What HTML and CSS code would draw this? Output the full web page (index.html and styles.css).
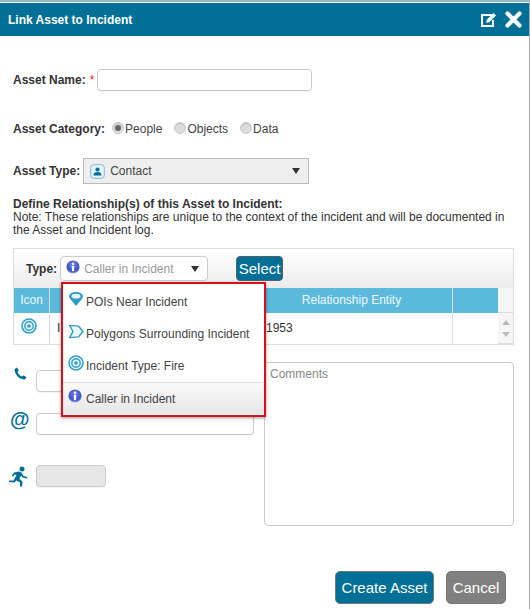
FILE: index.html
```html
<!DOCTYPE html>
<html lang="en">
<head>
    <meta charset="UTF-8">
    <title>Link Asset to Incident</title>
    <link rel="stylesheet" href="styles.css">
</head>
<body>
    <svg width="0" height="0" class="defs">
        <defs>
            <radialGradient id="info-fill" cx="50%" cy="35%" r="65%">
                <stop offset="0%" stop-color="#6f86e6"/>
                <stop offset="75%" stop-color="#3c52c4"/>
                <stop offset="100%" stop-color="#aab4e8"/>
            </radialGradient>
            <symbol id="info" viewBox="0 0 14 14">
                <circle cx="7" cy="7" r="6.6" fill="url(#info-fill)"/>
                <circle cx="7" cy="3.8" r="1.2" fill="#fff"/>
                <rect x="5.9" y="5.8" width="2.2" height="5.4" rx=".4" fill="#fff"/>
            </symbol>
            <symbol id="target" viewBox="0 0 16 16">
                <circle cx="8" cy="8" r="7" fill="#e4f4fa" stroke="#2f9fcb" stroke-width="1.6"/>
                <circle cx="8" cy="8" r="4.2" fill="none" stroke="#2f9fcb" stroke-width="1.4"/>
                <circle cx="8" cy="8" r="1.8" fill="#2f9fcb"/>
            </symbol>
        </defs>
    </svg>

    <div class="modal">
        <div class="modal-header">
            <span class="modal-title">Link Asset to Incident</span>
            <svg class="edit-icon" width="17" height="16" viewBox="0 0 17 16">
                <path d="M12 3H2v11h11V8" fill="none" stroke="#fff" stroke-width="2"/>
                <path d="M6 11l1-3.5L13.5 1 16 3.5 9.500 10z" fill="#fff"/>
            </svg>
            <svg class="close-icon" width="17" height="17" viewBox="0 0 17 17">
                <path d="M2.500 2.500l12 12M14.500 2.500l-12 12" stroke="#fff" stroke-width="4.200" stroke-linecap="round"/>
            </svg>
        </div>

        <div class="modal-body">
            <div class="form-row name-row">
                <label class="field-label">Asset Name:</label>
                <span class="required">*</span>
                <input type="text" class="text-input name-input">
            </div>

            <div class="form-row category-row">
                <label class="field-label">Asset Category:</label>
                <span class="radio checked"></span><span class="radio-text">People</span>
                <span class="radio"></span><span class="radio-text">Objects</span>
                <span class="radio"></span><span class="radio-text">Data</span>
            </div>

            <div class="form-row type-row">
                <label class="field-label">Asset Type:</label>
                <div class="asset-select">
                    <svg class="contact-icon" width="15" height="15" viewBox="0 0 15 15">
                        <rect x=".7" y=".7" width="13.600" height="13.600" rx="3" fill="#e6f3f8" stroke="#7dbcd5"/>
                        <circle cx="7.500" cy="5.500" r="2.100" fill="#046f98"/>
                        <path d="M3.500 11.500c0-2.500 1.500-3.500 4-3.500s4 1 4 3.500z" fill="#046f98"/>
                    </svg>
                    <span>Contact</span>
                    <span class="arrow"></span>
                </div>
            </div>

            <div class="relationship-note">
                <strong>Define Relationship(s) of this Asset to Incident:</strong><br>
                Note: These relationships are unique to the context of the incident and will be documented in the Asset and Incident log.
            </div>

            <div class="rel-panel">
                <div class="rel-toolbar">
                    <label class="field-label">Type:</label>
                    <div class="type-select">
                        <svg class="item-icon" width="14" height="14"><use href="#info"/></svg>
                        <span class="placeholder">Caller in Incident</span>
                        <span class="arrow"></span>
                    </div>
                    <button class="select-button">Select</button>
                </div>

                <div class="rel-head">
                    <div class="col-icon">Icon</div>
                    <div class="col-name"></div>
                    <div class="col-entity">Relationship Entity</div>
                    <div class="col-extra"></div>
                    <div class="col-scroll"></div>
                </div>
                <div class="rel-row">
                    <div class="col-icon"><svg width="16" height="16"><use href="#target"/></svg></div>
                    <div class="col-name">I</div>
                    <div class="col-entity">1953</div>
                    <div class="col-extra"></div>
                    <div class="col-scroll">
                        <span class="scroll-up"></span>
                        <span class="scroll-down"></span>
                    </div>
                </div>

                <ul class="type-menu">
                    <li>
                        <svg class="item-icon" width="16" height="16" viewBox="0 0 16 18" preserveAspectRatio="none">
                            <path d="M8 17L1.800 8.500C-.5 4.500 3 1 8 1s8.500 3.500 6.200 7.500z" fill="#2c9cc9"/>
                            <ellipse cx="8" cy="5.800" rx="4.400" ry="2.600" fill="#e8f5fa"/>
                        </svg>
                        POIs Near Incident
                    </li>
                    <li>
                        <svg class="item-icon" width="16" height="15" viewBox="0 0 16 17" preserveAspectRatio="none">
                            <path d="M1.500 1.500L10.500 2.500 15 8.500 10.500 14.500 1.500 15.500 5 8.500z" fill="#eef8fc" stroke="#2c9cc9" stroke-width="1.500" stroke-linejoin="round"/>
                        </svg>
                        Polygons Surrounding Incident
                    </li>
                    <li>
                        <svg class="item-icon" width="16" height="16"><use href="#target"/></svg>
                        Incident Type: Fire
                    </li>
                    <li class="active">
                        <svg class="item-icon" width="14" height="14"><use href="#info"/></svg>
                        Caller in Incident
                    </li>
                </ul>
            </div>

            <div class="contact-grid">
                <div class="contact-fields">
                    <div class="contact-row phone-row">
                        <svg class="row-icon" width="13" height="13" viewBox="0 0 13 13">
                            <path d="M2.800.5L4.800 3.400 3.500 5C4.300 7 6 8.700 8 9.500L9.600 8.200 12.500 10.200 10.800 12.500C5.500 12.500.5 7.500.5 2.200z" fill="#046f98"/>
                        </svg>
                        <input type="text" class="text-input wide-input">
                    </div>
                    <div class="contact-row email-row">
                        <span class="at-sign">@</span>
                        <input type="text" class="text-input wide-input">
                    </div>
                    <div class="contact-row run-row">
                        <svg class="row-icon" width="21" height="21" viewBox="0 0 21 21">
                            <circle cx="14" cy="3" r="2.500" fill="#046f98"/>
                            <path d="M6 6.500L11 5.500 13.500 6.500 15.500 10 19.500 11 19 12.500 14.500 11.500 13 9.500 11.500 13 14.500 15.500 14 20.500 12 20.500 12 16.500 8.500 14.500 6.500 16.500 1 16 1 14.500 5.500 14.500 8.500 9 6.800 8.500 5 10.500 3.800 9.500z" fill="#046f98"/>
                        </svg>
                        <input type="text" class="text-input short-input" disabled>
                    </div>
                </div>
                <textarea class="comments" placeholder="Comments"></textarea>
            </div>

            <div class="modal-actions">
                <button class="action-button create-button">Create Asset</button>
                <button class="action-button cancel-button">Cancel</button>
            </div>
        </div>
    </div>
</body>
</html>
```

FILE: styles.css
```css
* {
    box-sizing: border-box;
    margin: 0;
    padding: 0;
}

body {
    font-family: "Liberation Sans", Arial, sans-serif;
    font-size: 12px;
    color: #333;
    background: #fff;
    overflow: hidden;
}

.defs {
    position: absolute;
}

.modal {
    width: 530px;
    height: 609px;
    padding-top: 1px;
    border-top: 2px solid #9db6c2;
    border-right: 1px solid #aaa;
}

.modal-header {
    display: flex;
    align-items: center;
    height: 33px;
    padding: 0 7px 0 8px;
    background: #026f96;
    color: #fff;
}

.modal-title {
    flex: 1;
    font-size: 12px;
    font-weight: bold;
}

.edit-icon {
    margin-right: 8px;
}

.modal-body {
    padding: 0 15px 0 13px;
}

.form-row {
    display: flex;
    align-items: center;
}

.field-label {
    font-weight: bold;
    font-size: 12px;
}

.required {
    color: #e22;
    margin-left: 4px;
    font-size: 12px;
}

.text-input {
    height: 22px;
    border: 1px solid #ccc;
    border-radius: 4px;
    background: #fff;
    box-shadow: 0 1px 1px rgba(0, 0, 0, 0.05);
}

.name-row {
    margin-top: 33px;
}

.name-input {
    width: 215px;
    margin-left: 3px;
}

.category-row {
    margin-top: 30px;
    height: 16px;
}

.radio {
    width: 12px;
    height: 12px;
    border-radius: 50%;
    background: #dcdcdc;
    border: 1px solid #ccc;
    box-shadow: inset 0 1px 1px rgba(0, 0, 0, 0.15);
    margin-bottom: 3px;
    display: flex;
    align-items: center;
    justify-content: center;
}

.category-row .radio:first-of-type {
    margin-left: 7px;
}

.radio.checked::after {
    content: "";
    width: 6px;
    height: 6px;
    border-radius: 50%;
    background: #666;
}

.radio-text {
    margin-right: 12px;
    margin-left: 1px;
    color: #444;
}

.type-row {
    margin-top: 21px;
}

.asset-select {
    display: flex;
    align-items: center;
    gap: 5px;
    width: 226px;
    height: 26px;
    margin-left: 3px;
    padding: 0 8px 0 6px;
    border: 1px solid #bbb;
    background: #eee;
    color: #444;
}

.asset-select span:first-of-type {
    flex: 1;
}

.arrow {
    width: 0;
    height: 0;
    border-left: 4px solid transparent;
    border-right: 4px solid transparent;
    border-top: 6px solid #333;
}

.relationship-note {
    margin-top: 14px;
    line-height: 13px;
    width: 500px;
}

.relationship-note strong {
    font-size: 12px;
}

.rel-panel {
    position: relative;
    width: 501px;
    height: 97px;
    margin-top: 11px;
    border: 1px solid #ddd;
}

.rel-toolbar {
    display: flex;
    align-items: center;
    height: 39px;
    padding: 0 0 0 12px;
    background: linear-gradient(#fff, #ececec);
}

.type-select {
    display: flex;
    align-items: center;
    width: 148px;
    height: 25px;
    margin-left: 3px;
    padding: 0 8px 0 5px;
    border: 1px solid #ccc;
    border-radius: 4px;
    background: #fff;
}

.type-select .item-icon {
    margin-top: -3px;
}

.placeholder {
    flex: 1;
    margin-left: 4px;
    color: #999;
}

.select-button {
    width: 47px;
    height: 25px;
    margin-left: 28px;
    border: 1px solid #555f66;
    border-radius: 4px;
    background: #026f96;
    color: #fff;
    font: 15px "Liberation Sans", Arial, sans-serif;
}

.rel-head,
.rel-row {
    display: flex;
}

.rel-head {
    height: 25px;
    color: #eef8fc;
    background: #5bb9dc;
    text-align: center;
    line-height: 24px;
}

.rel-row {
    height: 31px;
    line-height: 31px;
}

.col-icon {
    width: 36px;
    flex: none;
    border-right: 1px solid #ddd;
    text-align: center;
}

.rel-row .col-icon {
    padding-left: 7px;
    text-align: left;
}

.col-icon svg {
    margin-top: 5px;
}

.col-name {
    width: 201px;
    flex: none;
    padding-left: 7px;
    white-space: nowrap;
    overflow: hidden;
}

.col-entity {
    width: 202px;
    flex: none;
    border-right: 1px solid #ddd;
}

.rel-row .col-entity {
    padding-left: 15px;
}

.col-extra {
    width: 45px;
    flex: none;
}

.col-scroll {
    flex: 1;
    background: #f5f5f5;
    border-bottom: 1px solid #ddd;
    display: flex;
    flex-direction: column;
    align-items: center;
    justify-content: center;
    gap: 7px;
}

.scroll-up {
    border-left: 4px solid transparent;
    border-right: 4px solid transparent;
    border-bottom: 5px solid #bbb;
}

.scroll-down {
    border-left: 4px solid transparent;
    border-right: 4px solid transparent;
    border-top: 5px solid #bbb;
}

.type-menu {
    position: absolute;
    left: 47px;
    top: 33px;
    z-index: 5;
    width: 205px;
    height: 135px;
    list-style: none;
    background: #fff;
    border: 2.500px solid #d8101c;
    box-shadow: 0 1px 3px rgba(0, 0, 0, 0.4);
    padding-top: 2px;
}

.type-menu li {
    display: flex;
    align-items: center;
    gap: 2px;
    height: 32px;
    padding-left: 5px;
    white-space: nowrap;
    color: #444;
}

.type-menu .item-icon {
    flex: none;
    margin-top: -6px;
}

.type-menu .active {
    border-top: 1px solid #ddd;
    background: linear-gradient(#fafafa, #e6e6e6);
    gap: 4px;
}

.contact-grid {
    display: flex;
    margin-top: 17px;
}

.contact-fields {
    width: 251px;
    flex: none;
}

.contact-row {
    display: flex;
    align-items: center;
}

.phone-row {
    margin-top: 8px;
}

.email-row {
    margin-top: 21px;
}

.run-row {
    margin-top: 30px;
}

.row-icon {
    flex: none;
}

.phone-row .row-icon {
    align-self: flex-start;
    margin: -3px 9px 0 1px;
}

.run-row .row-icon {
    margin: 0 7px 0 -5px;
}

.at-sign {
    align-self: flex-start;
    width: 26px;
    margin: -5px 0 0 -3px;
    font-size: 20px;
    font-weight: bold;
    color: #046f98;
    line-height: 22px;
}

.wide-input {
    width: 218px;
}

.short-input {
    width: 70px;
    background: #e6e6e6;
}

.comments {
    width: 250px;
    height: 164px;
    border: 1px solid #ccc;
    border-radius: 4px;
    padding: 4px 5px;
    font: 12px "Liberation Sans", Arial, sans-serif;
    resize: none;
    outline: none;
}

.comments::placeholder {
    color: #888;
}

.modal-actions {
    display: flex;
    justify-content: flex-end;
    gap: 12px;
    margin-top: 45px;
    padding-right: 8px;
}

.action-button {
    height: 33px;
    border: 1px solid #777;
    border-radius: 5px;
    color: #fff;
    font: 15px "Liberation Sans", Arial, sans-serif;
}

.create-button {
    width: 99px;
    background: #026f96;
}

.cancel-button {
    width: 60px;
    background: #808080;
}
```
